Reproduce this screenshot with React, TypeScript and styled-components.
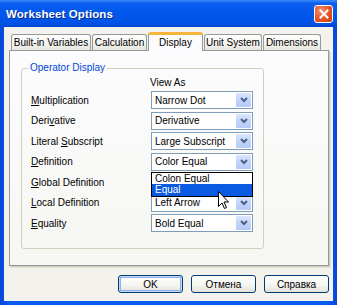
import React from 'react'
import styled, { createGlobalStyle } from 'styled-components'

const GlobalStyle = createGlobalStyle`
  html, body {
    margin: 0;
    padding: 0;
    background: #ffffff;
  }
  body {
    font-family: 'Liberation Sans', Arial, sans-serif;
    font-size: 10px;
    color: #000;
  }
`

const Window = styled.div`
  width: 337px;
  height: 305px;
  display: flex;
  flex-direction: column;
  background: linear-gradient(90deg, #0746d8 0%, #0a5cf0 3%, #0a5cf0 97%, #0746d8 100%);
  box-sizing: border-box;
  overflow: hidden;
`

const TitleBar = styled.div`
  height: 27px;
  flex: none;
  display: flex;
  align-items: center;
  justify-content: space-between;
  padding: 0 4px 0 6px;
  background: linear-gradient(180deg, #3b8cf8 0%, #0a5ef0 12%, #0257ec 50%, #0053e6 85%, #0046d3 100%);
`

const Title = styled.div`
  color: #fff;
  font-weight: bold;
  font-size: 11.5px;
  letter-spacing: 0.1px;
  text-shadow: 1px 1px 0 #0a2a8a;
`

const CloseButton = styled.div`
  width: 19px;
  height: 18px;
  box-sizing: border-box;
  border: 1px solid #fff;
  border-radius: 3px;
  background: radial-gradient(circle at 35% 30%, #f3906c 0%, #e4532a 55%, #c8400f 100%);
  display: flex;
  align-items: center;
  justify-content: center;
`

const Body = styled.div`
  flex: 1;
  margin: 0 4px 4px 4px;
  background: #f3f2ec;
  display: flex;
  flex-direction: column;
  padding: 5px 4px 0 5px;
`

const TabStrip = styled.div`
  height: 18px;
  display: flex;
  align-items: flex-end;
  gap: 1px;
  padding-left: 2px;
  position: relative;
  z-index: 1;
`

const Tab = styled.div<{ $w: number; $active?: boolean }>`
  width: ${({ $w }) => $w}px;
  height: ${({ $active }) => ($active ? 19 : 16)}px;
  margin-bottom: ${({ $active }) => ($active ? -1 : 0)}px;
  box-sizing: border-box;
  display: flex;
  align-items: center;
  justify-content: center;
  white-space: nowrap;
  border: 1px solid #919b9c;
  border-bottom: none;
  border-radius: 3px 3px 0 0;
  background: ${({ $active }) =>
    $active ? '#fcfcfe' : 'linear-gradient(180deg, #ffffff 0%, #f3f3ef 60%, #e6e5dd 100%)'};
  border-top: ${({ $active }) => ($active ? '3px solid #f5b43c' : '1px solid #919b9c')};
  padding-bottom: ${({ $active }) => ($active ? 2 : 0)}px;
`

const TabPanel = styled.div`
  height: 216px;
  box-sizing: border-box;
  border: 1px solid #919b9c;
  box-shadow: 1px 1px 0 #d0cebf, 2px 2px 0 #e3e1d6;
  background: linear-gradient(180deg, #fcfcfe 0%, #f6f6f2 100%);
  padding: 17px 0 0 11px;
`

const GroupBox = styled.div`
  position: relative;
  width: 243px;
  height: 181px;
  box-sizing: border-box;
  border: 1px solid #d0d0bf;
  border-radius: 3px;
  padding: 9px 10px 0 9px;
`

const GroupCaption = styled.div`
  position: absolute;
  top: -7px;
  left: 6px;
  padding: 0 2px;
  background: #fbfbfc;
  color: #0046d5;
  line-height: 12px;
`

const OptionGrid = styled.div`
  display: grid;
  grid-template-columns: 1fr 102px;
  grid-template-rows: 10.5px;
  grid-auto-rows: 18px;
  row-gap: 2.5px;
  align-items: center;
`

const ColumnHead = styled.div`
  grid-column: 2;
  line-height: 10px;
  margin-left: -1px;
`

const OptionLabel = styled.div`
  grid-column: 1;
  white-space: nowrap;
`

const Key = styled.span`
  text-decoration: underline;
  text-underline-offset: 1px;
`

const ComboCell = styled.div`
  grid-column: 2;
  position: relative;
  height: 18px;
`

const Combo = styled.div`
  height: 18px;
  box-sizing: border-box;
  border: 1px solid #7f9db9;
  background: #fff;
  display: flex;
  align-items: center;
  justify-content: space-between;
  padding: 0 1px 0 3px;
  white-space: nowrap;
`

const ArrowButton = styled.div`
  width: 15px;
  height: 14px;
  border-radius: 1px;
  background: linear-gradient(180deg, #dce6fd 0%, #c3d4fb 50%, #b5c9f8 100%);
  display: flex;
  align-items: center;
  justify-content: center;
`

const DropList = styled.div`
  position: absolute;
  top: calc(100% + 1px);
  left: 0;
  right: 0;
  z-index: 2;
  border: 1px solid #000;
  background: #fff;
`

const ListItem = styled.div<{ $selected?: boolean }>`
  height: 11.5px;
  line-height: 11.5px;
  padding-left: 3px;
  background: ${({ $selected }) => ($selected ? '#0a5be2' : '#fff')};
  color: ${({ $selected }) => ($selected ? '#fff' : '#000')};
`

const Pointer = styled.svg`
  position: absolute;
  left: 66px;
  top: 18px;
  z-index: 3;
`

const ButtonRow = styled.div`
  display: flex;
  justify-content: flex-end;
  gap: 8px;
  margin-top: 9px;
`

const DialogButton = styled.div<{ $default?: boolean }>`
  width: 65px;
  height: 18px;
  box-sizing: border-box;
  border: 1px solid #003c74;
  border-radius: 3px;
  background: linear-gradient(180deg, #ffffff 0%, #f4f4f0 60%, #e3e1d8 100%);
  display: flex;
  align-items: center;
  justify-content: center;
  box-shadow: ${({ $default }) => ($default ? 'inset 0 0 0 1px #c6d8f8, inset 0 0 0 2px #8fb0ec' : 'none')};
`

const Chevron = () => (
  <svg width="8" height="6" viewBox="0 0 8 6">
    <path d="M1 1 L4 4 L7 1" fill="none" stroke="#4d6185" strokeWidth="2" />
  </svg>
)

const CloseGlyph = () => (
  <svg width="10" height="10" viewBox="0 0 10 10">
    <path d="M1.5 1.5 L8.5 8.5 M8.5 1.5 L1.5 8.5" stroke="#fff" strokeWidth="2" strokeLinecap="square" />
  </svg>
)

interface IOption {
  pre: string
  key: string
  post: string
  value: string
}

const options: IOption[] = [
  { pre: '', key: 'M', post: 'ultiplication', value: 'Narrow Dot' },
  { pre: 'Deri', key: 'v', post: 'ative', value: 'Derivative' },
  { pre: 'Literal ', key: 'S', post: 'ubscript', value: 'Large Subscript' },
  { pre: '', key: 'D', post: 'efinition', value: 'Color Equal' },
  { pre: '', key: 'G', post: 'lobal Definition', value: 'Colon Equal' },
  { pre: '', key: 'L', post: 'ocal Definition', value: 'Left Arrow' },
  { pre: '', key: 'E', post: 'quality', value: 'Bold Equal' },
]

const tabs = [
  { label: 'Built-in Variables', w: 80 },
  { label: 'Calculation', w: 55 },
  { label: 'Display', w: 55, active: true },
  { label: 'Unit System', w: 58 },
  { label: 'Dimensions', w: 58 },
]

export default function App() {
  return (
    <>
      <GlobalStyle />
      <Window>
        <TitleBar>
          <Title>Worksheet Options</Title>
          <CloseButton>
            <CloseGlyph />
          </CloseButton>
        </TitleBar>
        <Body>
          <TabStrip>
            {tabs.map((t) => (
              <Tab key={t.label} $w={t.w} $active={t.active}>
                {t.label}
              </Tab>
            ))}
          </TabStrip>
          <TabPanel>
            <GroupBox>
              <GroupCaption>Operator Display</GroupCaption>
              <OptionGrid>
                <ColumnHead>View As</ColumnHead>
                {options.map((o, i) => (
                  <React.Fragment key={o.value}>
                    <OptionLabel>
                      {o.pre}
                      <Key>{o.key}</Key>
                      {o.post}
                    </OptionLabel>
                    <ComboCell>
                      {i === 4 ? null : (
                        <Combo>
                          {o.value}
                          <ArrowButton>
                            <Chevron />
                          </ArrowButton>
                        </Combo>
                      )}
                      {i === 3 && (
                        <DropList>
                          <ListItem>Colon Equal</ListItem>
                          <ListItem $selected>Equal</ListItem>
                          <Pointer width="12" height="19" viewBox="0 0 12 19">
                            <path
                              d="M0.5 0.5 L0.5 15.5 L4 12 L6.5 17.5 L8.5 16.5 L6 11 L10.5 11 Z"
                              fill="#fff"
                              stroke="#000"
                              strokeWidth="1"
                            />
                          </Pointer>
                        </DropList>
                      )}
                    </ComboCell>
                  </React.Fragment>
                ))}
              </OptionGrid>
            </GroupBox>
          </TabPanel>
          <ButtonRow>
            <DialogButton $default>OK</DialogButton>
            <DialogButton>Отмена</DialogButton>
            <DialogButton>Справка</DialogButton>
          </ButtonRow>
        </Body>
      </Window>
    </>
  )
}
